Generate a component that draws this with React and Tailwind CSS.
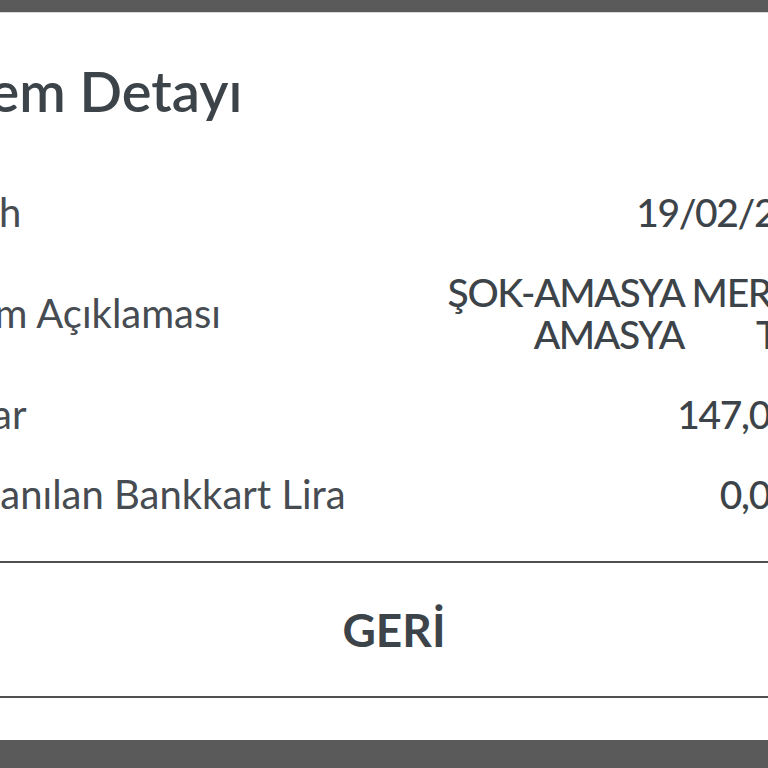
const rows = [
  { label: 'Tarih', value: ['19/02/2024'] },
  { label: 'İşlem Açıklaması', value: ['ŞOK-AMASYA MERKEZ', 'AMASYA'] },
  { label: 'Tutar', value: ['147,00 TL'] },
  { label: 'Kazanılan Bankkart Lira', value: ['0,00 TL'] },
];

export default function App() {
  return (
    <div className="h-[768px] w-[768px] overflow-hidden bg-[#5a5a5a] pt-3 font-['Lato','Liberation_Sans',sans-serif]">
      {/* Modal, wider than the visible area */}
      <div className="-ml-[100px] flex h-[728px] w-[988px] flex-col border-t border-[#d9d9d9] bg-white">
        <h1 className="mt-[50px] pl-[36px] text-[56px] font-semibold leading-[56px] text-[#3d4449]">İşlem Detayı</h1>

        <div className="mt-[72px] flex flex-col gap-[38px] pl-[36px] pr-[49px]">
          {rows.map((row) => (
            <div key={row.label} className="flex items-center justify-between">
              <span className="text-[40px] leading-[42px] text-[#464c51]">{row.label}</span>
              <div className="text-right text-[39px] font-medium leading-[42px] tracking-[-0.035em] text-[#3d4449]">
                {row.value.length === 1 ? (
                  row.value[0]
                ) : (
                  <>
                    <div>{row.value[0]}</div>
                    <div className="flex justify-end">
                      <span>{row.value[1]}</span>
                      <span className="ml-[72px] mr-[38px]">TR</span>
                    </div>
                  </>
                )}
              </div>
            </div>
          ))}
        </div>

        <div className="mt-[46px] border-y-2 border-[#4d4f51]">
          <button className="flex h-[133px] w-full items-center justify-center text-[46px] font-bold text-[#3d4449]">
            GERİ
          </button>
        </div>
      </div>
    </div>
  );
}
